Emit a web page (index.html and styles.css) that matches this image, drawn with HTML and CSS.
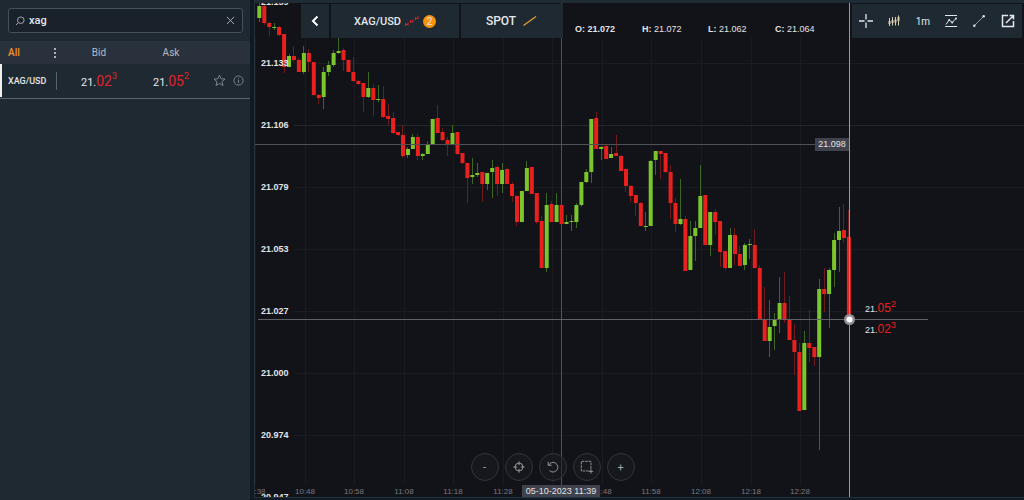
FILE: index.html
```html
<!DOCTYPE html>
<html lang="en">
<head>
<meta charset="utf-8">
<meta name="viewport" content="width=device-width, initial-scale=1">
<title>XAG/USD</title>
<link rel="stylesheet" href="styles.css">
</head>
<body>
<div class="app">
  <aside class="sidebar">
    <form class="search" role="search">
      <svg class="search-icon" viewBox="0 0 10 10" aria-hidden="true"><circle cx="5.8" cy="4.2" r="3.3"/><path d="M3.3 6.7 1 9"/></svg>
      <input class="search-input" type="text" value="xag" aria-label="Search instruments">
      <button class="plain" type="reset" aria-label="Clear search"><svg class="clear-icon" viewBox="0 0 10 10"><path d="M1 1l8 8M9 1 1 9"/></svg></button>
    </form>
    <table class="quotes">
      <thead>
        <tr>
          <th class="col-name"><div class="name-cell"><button class="plain filter" type="button">All</button><button class="plain more" type="button" aria-label="More"><svg class="dots" viewBox="0 0 4 12"><circle cx="2" cy="2" r="1"/><circle cx="2" cy="6" r="1"/><circle cx="2" cy="10" r="1"/></svg></button></div></th>
          <th>Bid</th><th>Ask</th><th class="col-tools"></th>
        </tr>
      </thead>
      <tbody>
        <tr>
          <td class="col-name"><div class="name-cell symbol">XAG/USD</div></td>
          <td><span class="price">21.<b>02</b><sup>3</sup></span></td>
          <td><span class="price">21.<b>05</b><sup>2</sup></span></td>
          <td class="col-tools"><div class="row-tools">
            <button class="plain" type="button" aria-label="Favourite"><svg class="row-icon star" viewBox="0 0 14 14"><path d="M7 1.2l1.7 3.9 4.2.4-3.2 2.8 1 4.1L7 10.200l-3.700 2.200 1-4.100L1.100 5.500l4.200-.4z"/></svg></button>
            <button class="plain" type="button" aria-label="Details"><svg class="row-icon" viewBox="0 0 12 12"><circle cx="6" cy="6" r="5"/><path d="M6 5.200v3.500M6 3.200v1"/></svg></button>
          </div></td>
        </tr>
      </tbody>
    </table>
  </aside>

  <main class="chart">
    <svg class="plot" id="plot" viewBox="255 3 769 494" role="img" aria-label="XAG/USD one minute candles"></svg>

    <nav class="tabs">
      <button class="tab tab-back" type="button" aria-label="Back"><svg class="chevron" viewBox="0 0 8 12"><path d="M6.500 1.500 2 6l4.500 4.500"/></svg></button>
      <button class="tab tab-pair" type="button">XAG/USD
        <svg class="mini" viewBox="0 0 16 12" aria-hidden="true"><path class="red" d="M1.500 8v3M4 7.500v3M6.500 5v3M9 4.500v3M11.500 2v3M14 1v3M1.500 9.500H4M6.500 6.500H9M11.500 3.500H14"/></svg>
        <span class="badge">2</span></button>
      <button class="tab tab-spot" type="button">SPOT
        <svg class="mini" viewBox="0 0 16 12" aria-hidden="true"><path class="gold" d="M1.500 10.500l12.500-9"/></svg></button>
    </nav>

    <div class="toolbar">
      <button class="tool" type="button" aria-label="Crosshair"><svg viewBox="0 0 16 16"><path class="cross" d="M8 1v5.500M8 9.500V15M1 8h5.500M9.500 8H15"/></svg></button>
      <button class="tool" type="button" aria-label="Chart type"><svg viewBox="0 0 16 16"><path class="cream" d="M3.500 5v8M6.500 4v8.500M9.500 4v8.500M12.500 2.500v10"/><path class="cream bar" d="M3.500 8v3M6.500 7v3M9.500 6.500v3M12.500 4v4"/></svg></button>
      <button class="tool" type="button">1m</button>
      <button class="tool" type="button" aria-label="Indicators"><svg viewBox="0 0 16 16"><path d="M2 2.500h12M2 13.500h12M3 11.500l3.200-4.500 3 2.500L13 5.500"/><circle class="fill" cx="6.200" cy="7" r="1"/><circle class="fill" cx="9.200" cy="9.500" r="1"/><circle class="fill" cx="13" cy="5.500" r="1"/></svg></button>
      <button class="tool" type="button" aria-label="Trend line"><svg viewBox="0 0 16 16"><path class="dim" d="M3.500 12.500l9-9"/><circle class="fill" cx="3.300" cy="12.700" r="1.200"/><circle class="fill" cx="12.700" cy="3.300" r="1.200"/></svg></button>
      <button class="tool" type="button" aria-label="Open in window"><svg viewBox="0 0 16 16"><path class="bold" d="M8 2.500H2.500v11h11V8M6 10l7-7M9.500 2.500h4v4"/></svg></button>
    </div>

    <div class="controls">
      <button class="round" type="button" aria-label="Zoom out">-</button>
      <button class="round" type="button" aria-label="Centre"><svg viewBox="0 0 16 16"><circle cx="8" cy="8" r="4.500"/><path d="M8 1.500V6M8 10v4.500M1.500 8H6M10 8h4.500"/></svg></button>
      <button class="round" type="button" aria-label="Reset"><svg viewBox="0 0 16 16"><path d="M2.500 2v4h4M3 6a5.500 5.500 0 1 1 1 6"/></svg></button>
      <button class="round" type="button" aria-label="Select area"><svg viewBox="0 0 16 16"><path class="dash" d="M12.500 10V1.500H1.500V12.500H10"/><path d="M10 13h5M12.500 10.500v5"/></svg></button>
      <button class="round" type="button" aria-label="Zoom in">+</button>
    </div>
  </main>
</div>
<script src="chart.js"></script>
</body>
</html>
```
FILE: styles.css
```css
* { box-sizing: border-box; }

body {
  margin: 0;
  background: #101a22;
  color: #e4e7ea;
  font-family: Roboto, "Liberation Sans", sans-serif;
  font-size: 10px;
}

button, input { font: inherit; color: inherit; }

svg { display: block; fill: none; stroke: currentColor; }

.app {
  display: flex;
  gap: 4px;
  min-height: 100vh;
}

.plain {
  display: block;
  padding: 0;
  border: 0;
  background: none;
}

/* Watch list */

.sidebar {
  flex: none;
  width: 250px;
  background: #1e2932;
}

.search {
  display: flex;
  align-items: center;
  gap: 4px;
  height: 25px;
  margin: 8px 7px 8px 8px;
  padding: 0 7px 0 6px;
  border: 1px solid #46505a;
  border-radius: 3px;
  background: #19212a;
}

.search-icon { width: 10px; height: 10px; color: #a0a6ac; }

.search-input {
  flex: 1;
  min-width: 0;
  padding: 0;
  border: 0;
  outline: 0;
  background: none;
  font-size: 11px;
  font-weight: 500;
}

.clear-icon { width: 9px; height: 9px; color: #b4b9be; }

.quotes {
  width: 100%;
  table-layout: fixed;
  border-collapse: collapse;
}

.quotes th, .quotes td { padding: 0; text-align: center; }

.quotes th {
  height: 23px;
  background: #29313c;
  color: #b5bac0;
  font-size: 10px;
  font-weight: 400;
}

.quotes td {
  height: 34px;
  border-bottom: 1px solid #59636c;
}

.quotes .col-name { width: 63px; }
.quotes .col-tools { width: 43px; }

.name-cell {
  display: flex;
  align-items: center;
  justify-content: space-between;
  padding-left: 8px;
}

.symbol {
  height: 33px;
  border-left: 2px solid #eef0f2;
  padding-left: 6px;
  font-size: 9px;
  font-weight: 500;
}

.symbol::after {
  content: "";
  width: 1px;
  height: 18px;
  margin-right: 6px;
  background: #59636c;
}

.filter { color: #f0941d; font-weight: 500; }
.more { padding-right: 6px; }
.dots { width: 4px; height: 12px; fill: #d8dce0; stroke: none; }

.price { font-size: 11px; white-space: nowrap; }
.price b { color: #e0242c; font-size: 14px; font-weight: 400; }
.price sup { color: #e0242c; font-size: 9px; line-height: 1; vertical-align: 7px; }

.row-tools {
  display: flex;
  align-items: center;
  justify-content: flex-end;
  gap: 7px;
  padding-right: 6px;
  color: #838c95;
}

.row-icon { width: 11px; height: 11px; }
.star { width: 13px; height: 13px; }

/* Chart */

.chart {
  position: relative;
  flex: 1;
  min-width: 0;
  border-top: 3px solid #1f2b35;
  border-left: 1px solid #26333d;
  border-bottom: 1px solid #243342;
  margin-bottom: 2px;
  background: #121318;
  overflow: hidden;
}

.plot {
  position: absolute;
  inset: 0;
  width: 100%;
  height: 100%;
  font-family: "Liberation Sans", Arial, sans-serif;
  font-size: 9px;
}

.plot text { stroke: none; fill: #e2e3e5; }
.plot .strong { font-weight: 700; }
.plot .time { fill: #777980; font-size: 8px; text-anchor: middle; }
.plot .center { text-anchor: middle; }
.plot .tag { fill: #40424d; stroke: none; }
.plot .grid { stroke: #1b1c21; }
.plot .grid-strong { stroke: #25272b; }
.plot .hair { stroke: #505156; }
.plot .edge { stroke: #97989b; }
.plot .level { stroke: #606166; }
.plot .up { fill: #7bc62d; stroke: none; }
.plot .down { fill: #e8211f; stroke: none; }
.plot .wick-up { stroke: #3d6824; }
.plot .wick-down { stroke: #6e1b1e; }
.plot .halo { fill: #909095; stroke: none; }
.plot .dot { fill: #ffffff; stroke: none; }
.plot .pips { fill: #e8211f; font-size: 12px; }
.plot .point { fill: #e8211f; font-size: 9px; }

.tabs {
  position: absolute;
  top: 1px;
  left: 46px;
  display: flex;
  gap: 2px;
}

.tab {
  display: flex;
  align-items: center;
  justify-content: center;
  gap: 3px;
  height: 34px;
  padding: 0;
  border: 0;
  background: #1f2932;
  font-size: 12px;
}

.tab-back { width: 28px; }
.tab-pair { width: 128px; font-size: 11px; font-weight: 500; }
.tab-spot { width: 102px; font-weight: 500; }
.chevron { width: 8px; height: 12px; stroke-width: 2; color: #fff; }
.mini { width: 16px; height: 12px; }
.red { stroke: #d0252d; }
.gold { stroke: #dc9832; stroke-width: 1.5; }
.tab-spot .mini { margin-left: 3px; }

.badge {
  display: grid;
  place-items: center;
  width: 13px;
  height: 13px;
  border-radius: 50%;
  background: #f6930d;
  font-size: 10px;
  font-weight: 400;
}

.toolbar {
  position: absolute;
  top: 1px;
  right: 2px;
  display: flex;
  align-items: center;
  width: 170px;
  height: 34px;
  background: #1f2932;
}

.tool {
  flex: 1;
  display: grid;
  place-items: center;
  height: 100%;
  padding: 0;
  border: 0;
  background: none;
  font-size: 10px;
}

.tool svg { width: 16px; height: 16px; }
.cross { stroke-width: 1.3; }
.cream { stroke: #d9ccae; }
.bar { stroke-width: 2; }
.dim { stroke: #8f979e; }
.bold { stroke-width: 1.5; }
.fill { fill: currentColor; stroke: none; }

.controls {
  position: absolute;
  bottom: 16px;
  left: 0;
  right: 174px;
  display: flex;
  justify-content: center;
  gap: 6px;
}

.round {
  display: grid;
  place-items: center;
  width: 28px;
  height: 28px;
  padding: 0;
  border: 1px solid #34353a;
  border-radius: 50%;
  background: #1b1c2199;
  color: #a5a6aa;
  font-size: 11px;
}

.round svg { width: 14px; height: 14px; }
.dash { stroke-dasharray: 3 1; }
```
FILE: chart.js
```js
// Each candle: direction, body top, body bottom, wick top, wick bottom.
const candles = `
g 6 18 1 22|r 6 23 3 25|r 23 27 22 36|g 27 28 23 30|r 27 35 26 36|r 34 67 34 73|g 56 67 54 67|r 56 60 46 62|r 60 72 58 72|g 53 72 46 74
r 53 62 49 72|r 62 95 62 96|r 95 98 94 104|g 72 97 67 109|g 65 72 61 76|g 53 65 50 67|g 51 53 38 54|r 50 60 48 71|r 60 72 59 72|r 72 81 57 82
r 81 84 80 85|r 83 97 83 112|g 88 97 72 98|r 88 100 84 116|g 99 100 85 102|r 99 117 86 118|r 116 119 104 125|r 118 133 112 134|r 132 135 132 136|r 135 156 125 158
g 149 155 147 158|g 137 149 134 149|r 137 156 134 160|g 154 156 153 160|g 144 154 141 154|g 119 144 119 144|r 118 133 105 133|r 132 140 128 141|r 140 144 137 156|g 133 144 125 144
r 132 154 132 155|r 153 163 153 164|r 163 178 163 203|g 175 177 158 184|g 173 175 163 177|r 172 184 172 202|g 173 184 173 190|g 168 172 160 198|r 167 184 165 196|g 170 184 163 193
r 169 184 168 184|r 184 196 182 202|r 196 222 195 226|g 191 222 191 222|g 168 191 161 191|r 167 194 167 194|r 193 222 193 224|r 221 268 216 268|g 205 268 193 272|r 204 222 201 222
g 205 222 193 222|r 205 224 204 229|g 222 224 215 224|g 221 222 215 231|g 205 222 203 228|g 182 205 182 207|g 172 182 169 183|g 119 172 119 183|r 118 149 112 149|g 147 149 146 160
r 146 159 145 159|g 154 158 147 158|r 153 156 135 156|r 156 171 155 171|r 169 186 168 192|r 186 196 185 202|r 195 203 195 216|r 203 226 202 226|g 226 227 212 231|g 161 226 160 226
g 151 160 151 175|r 151 154 151 179|r 153 172 153 173|r 172 203 165 219|r 203 224 198 232|g 219 224 179 225|r 219 271 216 271|g 236 270 221 270|g 228 236 221 261|g 196 228 165 228
r 195 245 195 245|g 212 245 212 256|r 212 222 209 235|r 221 252 221 267|r 251 268 251 270|g 235 268 228 268|r 235 254 228 265|r 254 266 246 266|g 245 265 243 270|g 244 245 239 259
r 245 268 229 268|r 268 319 265 319|r 319 341 287 341|g 327 341 300 357|g 319 326 313 350|g 303 319 277 333|r 303 319 272 323|r 319 340 296 340|r 340 352 324 375|r 352 411 343 411
g 343 410 331 410|r 343 348 310 362|r 347 357 347 366|g 289 357 279 450|r 289 294 268 312|g 270 294 268 328|g 240 270 233 287|g 231 240 207 272|r 230 238 204 243|r 237 319 210 319
`.trim().split(/[|\n]/).map(row => row.split(' '));

const prices = [['21.159', 2], ['21.133', 63], ['21.106', 125], ['21.079', 187], ['21.053', 249], ['21.027', 311], ['21.000', 373], ['20.974', 435], ['20.947', 497]];
const times = [':38', '10:48', '10:58', '11:08', '11:18', '11:28', '11:38', '11:48', '11:58', '12:08', '12:18', '12:28'];

const line = (x1, y1, x2, y2, name) => `<path class="${name}" d="M${x1} ${y1}L${x2} ${y2}"/>`;
const text = (x, y, value, name = '') => `<text class="${name}" x="${x}" y="${y}">${value}</text>`;
const timeX = i => Math.round(255 + i * 49.55);
const out = [];

times.forEach((t, i) => out.push(line(timeX(i) + 0.5, 38, timeX(i) + 0.5, 484, 'grid')));
prices.forEach(([p, y]) => out.push(line(294, y + 0.5, 1024, y + 0.5, p === '21.106' ? 'grid-strong' : 'grid')));

times.forEach((t, i) => {
  if (t !== '11:38') out.push(text(i ? timeX(i) : 260, 494, t, 'time'));
});

candles.forEach(([dir, top, bottom, high, low], i) => {
  const x = 259.3 + i * 4.955;
  const up = dir === 'g';
  const mid = Math.floor(x) + 0.5;
  out.push(line(mid, high, mid, low, up ? 'wick-up' : 'wick-down'));
  out.push(`<rect class="${up ? 'up' : 'down'}" x="${(x - 2).toFixed(1)}" y="${top}" width="4" height="${bottom - top}"/>`);
});

prices.forEach(([p, y]) => out.push(text(261, y + 3, p, 'strong')));

[['O', '21.072', 575], ['H', '21.072', 642], ['L', '21.062', 708], ['C', '21.064', 775]].forEach(([k, v, x], i) => {
  out.push(text(x, 32, `<tspan class="strong">${k}:</tspan> <tspan class="${i ? '' : 'strong'}">${v}</tspan>`));
});

out.push(line(255, 144.5, 849, 144.5, 'hair'), line(561.5, 3, 561.5, 486, 'hair'));
out.push(line(258, 319.5, 928, 319.5, 'level'), line(849.5, 3, 849.5, 497, 'edge'));
out.push('<rect class="tag" x="815" y="138" width="34" height="13"/>', text(832, 147, '21.098', 'center'));
out.push('<rect class="tag" x="522" y="485" width="78" height="12"/>', text(561, 494, '05-10-2023 11:39', 'center'));
out.push('<circle class="halo" cx="849.500" cy="319.500" r="5.500"/><circle class="dot" cx="849.500" cy="319.500" r="3"/>');

[['05', '2', 312], ['02', '3', 333]].forEach(([pips, point, y]) => {
  out.push(text(865, y, `21.<tspan class="pips">${pips}</tspan><tspan class="point" dy="-5">${point}</tspan>`));
});

document.getElementById('plot').innerHTML = out.join('');
```
